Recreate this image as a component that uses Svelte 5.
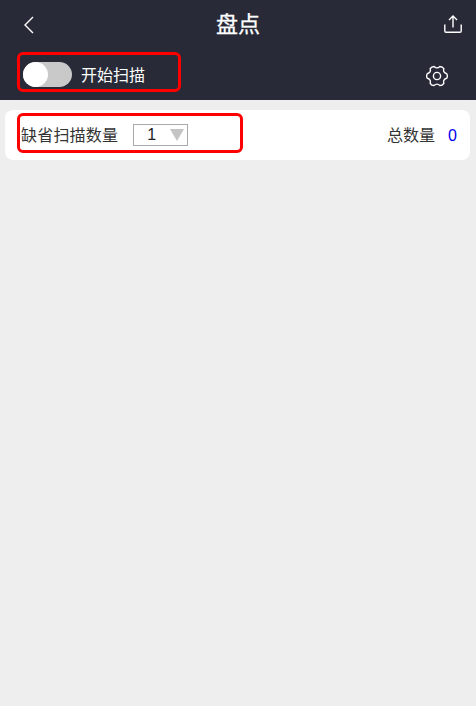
<script>
  let total = 0;

  // six rounded teeth with shallow dips between them
  const pt = (deg, r) => {
    const a = (deg * Math.PI) / 180;
    return `${(11 + r * Math.cos(a)).toFixed(2)} ${(11 + r * Math.sin(a)).toFixed(2)}`;
  };
  const gear =
    `M${pt(-13, 10)} ` +
    [0, 60, 120, 180, 240, 300]
      .map((a) => `Q${pt(a, 11)} ${pt(a + 13, 10)} Q${pt(a + 30, 6.6)} ${pt(a + 47, 10)}`)
      .join(' ') +
    ' Z';
</script>

<div class="page">
  <header>
    <div class="title-row">
      <button class="icon back" aria-label="back">
        <svg width="12" height="18" viewBox="0 0 12 18"><path d="M10 1 L2 9 L10 17" /></svg>
      </button>
      <h1>盘点</h1>
      <button class="icon export" aria-label="export">
        <svg width="18" height="18" viewBox="0 0 18 18">
          <path d="M9 12.5 V1.2 M5 5 L9 1 L13 5" />
          <path d="M0.8 9.5 V16 Q0.8 17.2 2 17.2 H16 Q17.2 17.2 17.2 16 V9.5" />
        </svg>
      </button>
    </div>
    <div class="tool-row">
      <div class="scan">
        <span class="switch"><span class="knob"></span></span>
        <span class="scan-label">开始扫描</span>
      </div>
      <button class="icon gear" aria-label="settings">
        <svg width="22" height="22" viewBox="0 0 22 22">
          <path d={gear} />
          <circle cx="11" cy="11" r="3.6" />
        </svg>
      </button>
    </div>
    <div class="mark mark-scan"></div>
  </header>

  <section class="card">
    <div class="default-qty">
      <span class="qty-label">缺省扫描数量</span>
      <div class="select">
        <span class="value">1</span>
        <span class="arrow"></span>
      </div>
    </div>
    <div class="total">
      <span>总数量</span>
      <span class="count">{total}</span>
    </div>
    <div class="mark mark-qty"></div>
  </section>
</div>

<style>
  :global(body) {
    background: #eeeeee;
  }

  .page {
    height: 706px;
    background: #eeeeee;
    font-family: "Liberation Sans", "Noto Sans CJK SC", sans-serif;
  }

  header {
    position: relative;
    height: 100px;
    box-sizing: border-box;
    background: #282a38;
    color: #fff;
  }

  .title-row {
    display: grid;
    grid-template-columns: 1fr auto 1fr;
    align-items: center;
    height: 50px;
    padding: 0 14px;
    box-sizing: border-box;
  }

  h1 {
    margin: 0;
    font-size: 22px;
    line-height: 28px;
    font-weight: 400;
    -webkit-text-stroke: 0.3px #fff;
  }

  .icon {
    display: flex;
    padding: 0;
    border: none;
    background: none;
  }

  .back {
    margin-left: 9px;
  }

  .export {
    justify-self: end;
    margin-bottom: 2px;
  }

  svg {
    fill: none;
    stroke: #fff;
    stroke-width: 1.4;
  }

  .tool-row {
    display: flex;
    align-items: center;
    justify-content: space-between;
    height: 50px;
    padding: 1px 28px 0 23px;
    box-sizing: border-box;
  }

  .scan {
    display: flex;
    align-items: center;
    gap: 9px;
    margin-top: -2px;
  }

  .switch {
    display: block;
    width: 49px;
    height: 25px;
    border-radius: 13px;
    background: #c9c9c9;
  }

  .knob {
    display: block;
    width: 25px;
    height: 25px;
    border-radius: 50%;
    background: #fff;
  }

  .scan-label {
    font-size: 16px;
    line-height: 20px;
    margin-top: 3px;
  }

  .card {
    position: relative;
    display: flex;
    align-items: center;
    justify-content: space-between;
    height: 50px;
    margin: 10px 6px 0 5px;
    padding: 0 13px 0 16px;
    border-radius: 8px;
    background: #fff;
    color: #333;
    font-size: 16px;
    line-height: 20px;
  }

  .default-qty {
    display: flex;
    align-items: center;
    gap: 15px;
  }

  .qty-label {
    margin-top: 1px;
    letter-spacing: 0.2px;
  }

  .select {
    display: flex;
    align-items: center;
    justify-content: space-between;
    box-sizing: border-box;
    width: 55px;
    height: 22px;
    padding: 0 3px 0 13px;
    border: 1px solid #a9a9a9;
    color: #222;
  }

  .arrow {
    width: 0;
    height: 0;
    border-left: 7px solid transparent;
    border-right: 7px solid transparent;
    border-top: 12px solid #c4c4c4;
  }

  .total {
    display: flex;
    align-items: center;
    gap: 13px;
    margin-top: 1px;
  }

  .count {
    color: #0000ee;
  }

  .mark {
    position: absolute;
    box-sizing: border-box;
    border: 3px solid #ff0000;
    border-radius: 6px;
  }

  .mark-scan {
    left: 17px;
    top: 52px;
    width: 164px;
    height: 40px;
  }

  .mark-qty {
    left: 12px;
    top: 3px;
    width: 226px;
    height: 40px;
  }
</style>
